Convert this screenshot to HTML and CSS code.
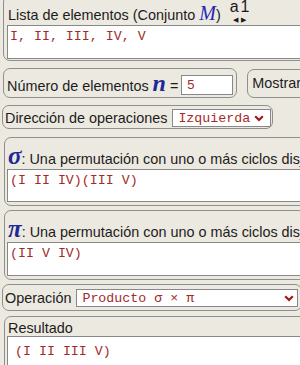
FILE: index.html
```html
<!DOCTYPE html>
<html lang="es">
<head>
<meta charset="utf-8">
<title>Permutaciones</title>
<link rel="stylesheet" href="styles.css">
</head>
<body>
<div class="page">
  <section class="grp g-list">
    <div class="head">
      <span class="lbl">Lista de elementos (Conjunto <i class="mvar">M</i>)</span>
      <span class="a1">
        <span class="a1-t"><span class="a1-a">a</span><span class="a1-1">1</span></span>
        <span class="a1-arr"><span>&#9664;</span><span>&#9654;</span></span>
      </span>
    </div>
    <div class="ta ta-list">I, II, III, IV, V</div>
  </section>

  <div class="row">
    <div class="grp g-num">
      <span class="lbl">Número de elementos <b class="nvar">n</b> =</span>
      <span class="inp">5</span>
    </div>
    <div class="grp g-show"><span class="lbl">Mostrar permutaciones</span></div>
  </div>

  <div class="grp g-dir">
    <span class="lbl">Dirección de operaciones</span>
    <span class="sel sel-dir"><span>Izquierda</span>
      <svg class="chev" width="10" height="7" viewBox="0 0 10 7"><path d="M1.2 1.2 L5 5 L8.8 1.2" fill="none" stroke="#a01818" stroke-width="2.2"/></svg>
    </span>
  </div>

  <section class="grp g-perm g-sigma">
    <div class="plbl"><b class="gvar">σ</b>: Una permutación con uno o más ciclos disjuntos</div>
    <div class="ta ta-perm">(I II IV)(III V)</div>
  </section>

  <section class="grp g-perm g-pi">
    <div class="plbl"><b class="gvar">π</b>: Una permutación con uno o más ciclos disjuntos</div>
    <div class="ta ta-perm ta-pi">(II V IV)</div>
  </section>

  <div class="grp g-op">
    <span class="lbl">Operación</span>
    <span class="sel sel-op"><span>Producto σ × π</span>
      <svg class="chev" width="10" height="7" viewBox="0 0 10 7"><path d="M1.2 1.2 L5 5 L8.8 1.2" fill="none" stroke="#a01818" stroke-width="2.2"/></svg>
    </span>
  </div>

  <section class="grp g-res">
    <div class="rlbl">Resultado</div>
    <div class="ta ta-res">(I II III V)</div>
  </section>
</div>
</body>
</html>
```
FILE: styles.css
```css
html, body {
  margin: 0;
  padding: 0;
  overflow: hidden;
  background: #ece9e1;
}
body {
  font-family: "Liberation Sans", Arial, sans-serif;
  font-size: 14.4px;
  color: #1c1c1c;
}
.page {
  width: 306px;
  display: flex;
  flex-direction: column;
  align-items: flex-start;
}
.grp {
  border: 1px solid #8f8f8f;
  border-radius: 7px;
  box-sizing: border-box;
}
.lbl { white-space: nowrap; line-height: 16px; }

/* list group */
.g-list {
  margin: -5px 0 0 3px;
  width: 303px;
  padding: 0 0 1px 3px;
}
.head {
  display: flex;
  align-items: flex-end;
  height: 29px;
}
.head .lbl { padding: 0 0 2px 1px; }
.mvar {
  font-family: "Liberation Serif", "Times New Roman", serif;
  font-size: 20px;
  color: #2626b4;
  line-height: 15px;
}
.a1 {
  display: flex;
  flex-direction: column;
  align-items: center;
  margin: 0 0 3px 9px;
  color: #1a1a1a;
}
.a1-t {
  display: flex;
  align-items: flex-end;
  gap: 2px;
  height: 13px;
  line-height: 13px;
  font-size: 16px;
}
.a1-arr {
  display: flex;
  gap: 3px;
  font-size: 7px;
  line-height: 5px;
  height: 5px;
  margin-top: 4px;
}
.ta {
  background: #fff;
  border: 1px solid #888;
  box-sizing: border-box;
  font-family: "Liberation Mono", "Courier New", monospace;
  font-size: 13.3px;
  color: #a32a2a;
  white-space: pre;
  overflow: hidden;
}
.ta-list {
  width: 300px;
  height: 34px;
  padding: 3px 2px;
  line-height: 15px;
}

/* number row */
.row {
  display: flex;
  gap: 10px;
  margin: 7px 0 0 3px;
  width: 320px;
}
.g-num {
  display: flex;
  align-items: center;
  padding: 6px 3px 2px 3px;
  height: 30px;
}
.nvar {
  font-family: "Liberation Serif", "Times New Roman", serif;
  font-style: italic;
  font-size: 24px;
  color: #1e2896;
  line-height: 15px;
}
.inp {
  display: block;
  box-sizing: border-box;
  width: 52px;
  height: 20px;
  margin-left: 3px;
  background: #fff;
  border: 1px solid #888;
  color: #a32a2a;
  padding: 1px 5px;
  line-height: 16px;
  font-size: 13px;
}
.g-show {
  flex: none;
  width: 120px;
  height: 29px;
  margin-top: 1px;
  padding: 5px 0 0 4px;
  overflow: hidden;
}

/* direction */
.g-dir {
  display: flex;
  align-items: flex-end;
  margin: 7px 0 0 2px;
  padding: 3px 1px 1px 2px;
  height: 24px;
}
.g-dir .lbl { padding-bottom: 1px; }
.sel {
  display: flex;
  align-items: center;
  justify-content: space-between;
  box-sizing: border-box;
  background: #fff;
  border: 1px solid #888;
  font-family: "Liberation Mono", "Courier New", monospace;
  font-size: 13.3px;
  color: #a32a2a;
  white-space: pre;
}
.sel-dir {
  width: 99px;
  height: 18px;
  margin-left: 5px;
  padding: 0 6px 0 5px;
}
.chev { flex: none; }

/* permutation groups */
.g-perm {
  width: 302px;
  margin-left: 4px;
  padding: 0 0 3px 2px;
}
.g-sigma { margin-top: 8px; }
.g-pi { margin-top: 4px; }
.plbl {
  padding: 10px 0 0 1px;
  line-height: 20px;
  white-space: nowrap;
  overflow: hidden;
}
.gvar {
  font-family: "Liberation Serif", "Times New Roman", serif;
  font-style: italic;
  font-size: 25px;
  color: #1e2896;
  line-height: 15px;
}
.ta-perm {
  width: 300px;
  height: 33px;
  padding: 3px 2px;
  line-height: 15px;
}
.ta-pi { height: 34px; }

/* operation */
.g-op {
  display: flex;
  align-items: center;
  width: 300px;
  height: 27px;
  margin: 4px 0 0 2px;
  padding: 3px 3px 2px 2px;
}
.sel-op {
  flex: 1;
  height: 18px;
  margin-left: 5px;
  padding: 0 3px 0 5px;
}

/* result */
.g-res {
  width: 302px;
  margin: 5px 0 0 4px;
  padding: 0 0 0 2px;
}
.rlbl {
  padding: 4px 0 0 1px;
  line-height: 15px;
}
.ta-res {
  width: 300px;
  height: 40px;
  padding: 7px 7px;
  line-height: 15px;
}
```
